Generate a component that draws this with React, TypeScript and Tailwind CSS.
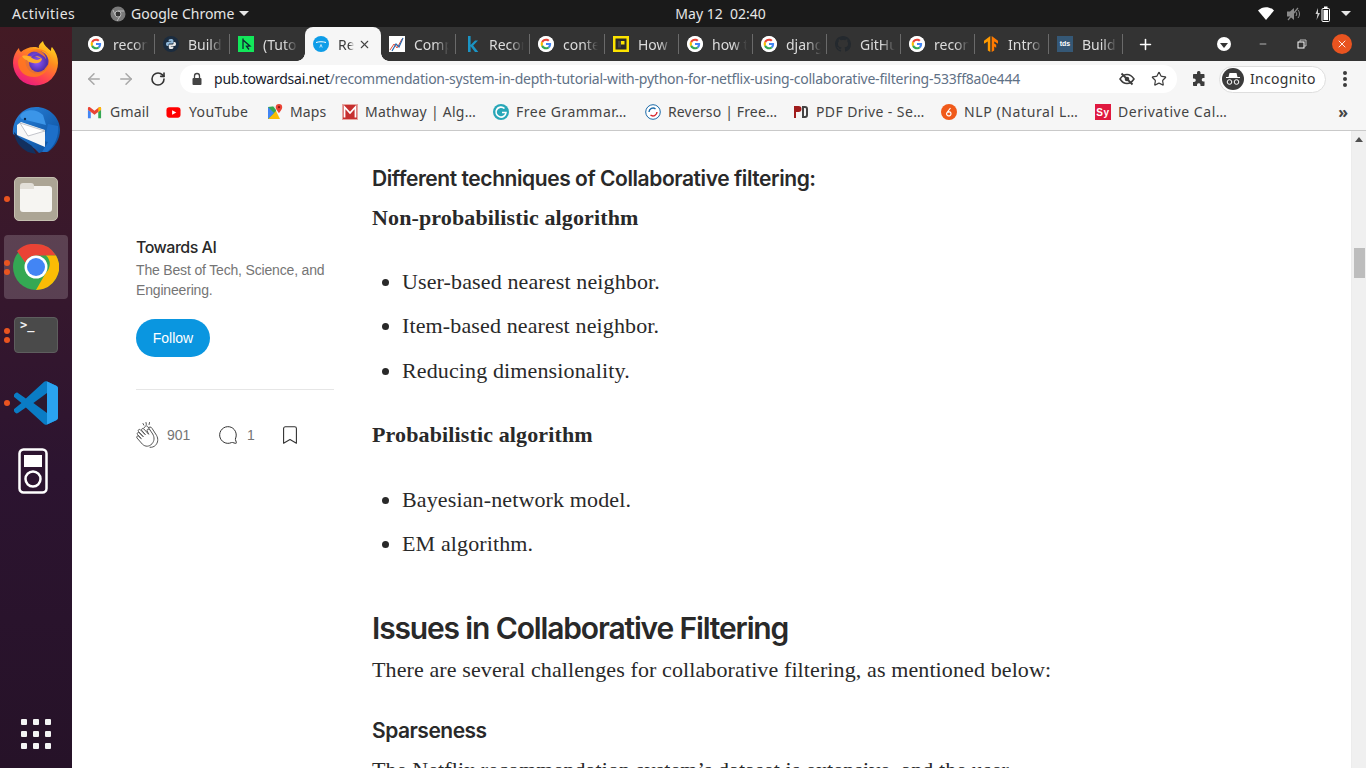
import React from "react";
import { ArrowLeft, ArrowRight, RotateCw, X, Plus, Star, MessageCircle, Bookmark, Minus } from "lucide-react";

const G = ({ s = 16 }: { s?: number }) => (
  <svg width={s} height={s} viewBox="0 0 48 48" className="flex-none rounded-full bg-white">
    <circle cx="24" cy="24" r="24" fill="#fff" />
    <g transform="translate(8 8) scale(.667)">
      <path fill="#EA4335" d="M24 9.5c3.5 0 6.7 1.2 9.2 3.6l6.9-6.9C35.9 2.4 30.5 0 24 0 14.6 0 6.5 5.4 2.6 13.2l8 6.2C12.5 13.6 17.8 9.5 24 9.5z" />
      <path fill="#4285F4" d="M47 24.5c0-1.6-.1-3.1-.4-4.5H24v9h13c-.6 3-2.3 5.500-4.800 7.200l7.700 6C44.400 38.500 47 32 47 24.500z" />
      <path fill="#FBBC05" d="M10.600 28.600c-.5-1.400-.8-3-.8-4.600s.3-3.200.8-4.600l-8-6.200C.9 16.500 0 20.100 0 24s.9 7.500 2.600 10.800l8-6.200z" />
      <path fill="#34A853" d="M24 48c6.500 0 11.900-2.100 15.900-5.800l-7.700-6c-2.200 1.500-5 2.300-8.200 2.300-6.200 0-11.500-4.100-13.400-9.900l-8 6.200C6.500 42.600 14.600 48 24 48z" />
    </g>
  </svg>
);

const PyIcon = () => (
  <svg width="16" height="16" viewBox="0 0 16 16" className="flex-none">
    <circle cx="8" cy="8" r="8" fill="#1b2c3f" />
    <path d="M8 3C6 3 5.600 3.800 5.600 4.600V5.600H8.200V6H4.500C3.500 6 3 6.800 3 8s.5 2 1.500 2h1V8.800C5.500 7.800 6.200 7.400 7 7.400h2.200c.7 0 1.200-.5 1.200-1.200V4.600C10.400 3.600 9.500 3 8 3z" fill="#8fb7d8" />
    <path d="M8 13c2 0 2.400-.8 2.400-1.600V10.400H7.800V10h3.700c1 0 1.500-.8 1.500-2s-.5-2-1.500-2h-1v1.200c0 1-.7 1.400-1.500 1.400H7c-.7 0-1.200.5-1.200 1.200v1.600C5.800 12.400 6.500 13 8 13z" fill="#e8e8e8" />
  </svg>
);
const TutIcon = () => (
  <svg width="16" height="16" viewBox="0 0 16 16" className="flex-none">
    <rect width="16" height="16" fill="#12e85a" />
    <path d="M5 2.500V13M5 4l7 6-3.500.3L11 13.500" stroke="#123" strokeWidth="1.300" fill="none" />
  </svg>
);
const AiIcon = () => (
  <svg width="16" height="16" viewBox="0 0 16 16" className="flex-none">
    <circle cx="8" cy="8" r="8" fill="#0e9de8" />
    <path d="M3 6.500c3-1 7-1 10 0" stroke="#fff" strokeWidth="1" fill="none" />
    <path d="M6.800 11.500l1.200-3 1.200 3" stroke="#fff" strokeWidth=".7" fill="none" />
  </svg>
);
const CompIcon = () => (
  <svg width="16" height="16" viewBox="0 0 16 16" className="flex-none">
    <rect width="16" height="16" fill="#fff" />
    <path d="M1 14l4-6 3 4 5-9" stroke="#e5533d" strokeWidth="1" fill="none" />
    <path d="M3 15l4-7 3 3 4-9" stroke="#2767ad" strokeWidth="1.200" fill="none" />
  </svg>
);
const KIcon = () => (
  <svg width="16" height="16" viewBox="0 0 16 16" className="flex-none">
    <path d="M4 0h2.600v9L11 4.500h3L9.200 9.400 14.300 16H11l-4.400-5.800V16H4z" fill="#1b94c4" />
  </svg>
);
const HowIcon = () => (
  <svg width="16" height="16" viewBox="0 0 16 16" className="flex-none">
    <rect width="16" height="16" fill="#fce300" />
    <rect x="2.500" y="2.500" width="11" height="11" fill="#2a2a2a" />
    <rect x="8" y="5" width="3.500" height="3.500" fill="#fce300" />
    <rect x="5" y="5" width="3" height="6.500" fill="#444" />
  </svg>
);
const GhIcon = () => (
  <svg width="16" height="16" viewBox="0 0 16 16" className="flex-none">
    <path fill="#24292e" d="M8 0C3.580 0 0 3.580 0 8c0 3.540 2.290 6.530 5.470 7.590.4.070.55-.170.55-.380 0-.190-.010-.820-.010-1.490-2.010.370-2.530-.490-2.690-.940-.090-.230-.480-.940-.820-1.130-.280-.150-.680-.520-.010-.530.630-.010 1.080.580 1.230.820.720 1.210 1.870.870 2.330.660.070-.520.280-.870.510-1.070-1.780-.200-3.640-.890-3.640-3.950 0-.870.310-1.590.820-2.150-.080-.200-.360-1.020.080-2.120 0 0 .670-.210 2.200.820a7.420 7.420 0 0 1 4 0c1.530-1.040 2.200-.820 2.200-.820.440 1.100.160 1.920.080 2.120.510.560.820 1.270.820 2.150 0 3.070-1.870 3.750-3.650 3.950.290.250.540.730.540 1.480 0 1.070-.010 1.930-.010 2.200 0 .210.150.460.550.380A8.010 8.010 0 0 0 16 8c0-4.420-3.580-8-8-8z" />
  </svg>
);
const TfIcon = () => (
  <svg width="16" height="16" viewBox="0 0 16 16" className="flex-none">
    <path d="M7.300 0v16l-2.500-1.500V5.500L1 7.700V4.700z" fill="#ff9a00" />
    <path d="M8.700 0v16l2.500-1.500v-4l2 1.200V8.800l-2-1.200V5.500l3.800 2.200V4.700z" fill="#ff7a00" />
  </svg>
);
const TdsIcon = () => (
  <div className="w-4 h-4 flex-none bg-[#355876] text-white text-[7px] font-bold flex items-center justify-center font-['Liberation_Sans',sans-serif]">tds</div>
);

const tabs: { icon: React.ReactNode; label: string; w: string; active?: boolean; noSep?: boolean }[] = [
  { icon: <G />, label: "recon", w: "w-[75px]" },
  { icon: <PyIcon />, label: "Build", w: "w-[75px]" },
  { icon: <TutIcon />, label: "(Tuto", w: "w-[75px]", noSep: true },
  { icon: <AiIcon />, label: "Re", w: "w-[76px]", active: true, noSep: true },
  { icon: <CompIcon />, label: "Comp", w: "w-[75px]" },
  { icon: <KIcon />, label: "Recon", w: "w-[74px]" },
  { icon: <G />, label: "conte", w: "w-[75px]" },
  { icon: <HowIcon />, label: "How", w: "w-[74px]" },
  { icon: <G />, label: "how t", w: "w-[74px]" },
  { icon: <G />, label: "djang", w: "w-[74px]" },
  { icon: <GhIcon />, label: "GitHu", w: "w-[74px]" },
  { icon: <G />, label: "recon", w: "w-[74px]" },
  { icon: <TfIcon />, label: "Intro", w: "w-[74px]" },
  { icon: <TdsIcon />, label: "Build", w: "w-[74px]" },
];

const GmailI = () => (
  <svg width="15" height="15" viewBox="0 0 16 16" className="flex-none">
    <path d="M1 14V3.500L8 9l7-5.500V14h-3V7.500L8 10.500 4 7.500V14z" fill="#e8e8e8" />
    <path d="M1 14h3V7.500L1 5z" fill="#4285f4" />
    <path d="M12 14h3V5l-3 2.500z" fill="#34a853" />
    <path d="M1 5V3.500C1 2.300 2.300 1.800 3.200 2.500L8 6.200 12.800 2.500c.9-.7 2.200-.2 2.200 1V5L8 10.500z" fill="#ea4335" />
    <path d="M12 3.200l.8-.7c.9-.7 2.200-.2 2.200 1V5l-3 2.500z" fill="#fbbc04" />
  </svg>
);
const YtI = () => (
  <svg width="15" height="15" viewBox="0 0 16 16" className="flex-none">
    <rect x="0.500" y="2.500" width="15" height="11" rx="3" fill="#f00" />
    <path d="M6.500 5.500v5L11 8z" fill="#fff" />
  </svg>
);
const MapsI = () => (
  <svg width="16" height="16" viewBox="0 0 16 16" className="flex-none">
    <path d="M1 3l8-1v13l-8 0z" fill="#34a853" />
    <path d="M1 15L9 7l4 8z" fill="#fbbc04" />
    <path d="M1 3l6 6-6 6z" fill="#4285f4" />
    <path d="M6 2h3v4z" fill="#e8e8e8" />
    <path d="M12 0a3.200 3.200 0 0 0-3.200 3.200C8.800 5.500 12 9 12 9s3.200-3.500 3.200-5.800A3.200 3.200 0 0 0 12 0z" fill="#ea4335" />
    <circle cx="12" cy="3.200" r="1.100" fill="#8b1a10" />
  </svg>
);
const MathI = () => (
  <svg width="16" height="16" viewBox="0 0 16 16" className="flex-none">
    <rect width="16" height="16" fill="#c62f2f" />
    <path d="M2.500 13.500V3L8 9l5.500-6v10.500" stroke="#fff" strokeWidth="1.800" fill="none" />
    <rect x="0.500" y="0.500" width="15" height="15" fill="none" stroke="#e8a5a0" />
  </svg>
);
const GramI = () => (
  <svg width="16" height="16" viewBox="0 0 16 16" className="flex-none">
    <circle cx="8" cy="8" r="8" fill="#28a7b8" />
    <path d="M11.500 4.500A5 5 0 1 0 13 8.500H9" stroke="#fff" strokeWidth="1.600" fill="none" />
  </svg>
);
const RevI = () => (
  <svg width="16" height="16" viewBox="0 0 16 16" className="flex-none">
    <circle cx="8" cy="8" r="7.300" fill="#fff" stroke="#1b6aa8" />
    <path d="M4 8a4 4 0 0 1 6.500-3" stroke="#1b6aa8" strokeWidth="1.400" fill="none" />
    <path d="M12 8a4 4 0 0 1-6.500 3" stroke="#d8232a" strokeWidth="1.400" fill="none" />
  </svg>
);
const PdfI = () => (
  <svg width="16" height="16" viewBox="0 0 16 16" className="flex-none">
    <path d="M1 2h4.500a2.500 2.500 0 0 1 0 6H3v6H1z" fill="#a01c1c" />
    <path d="M9 2h3a3 3 0 0 1 3 3v6a3 3 0 0 1-3 3H9zM11 4v8h1a1 1 0 0 0 1-1V5a1 1 0 0 0-1-1z" fill="#444" />
  </svg>
);
const NlpI = () => (
  <svg width="16" height="16" viewBox="0 0 16 16" className="flex-none">
    <circle cx="8" cy="8" r="8" fill="#f05a1a" />
    <path d="M9.500 4L6 8.500a2.200 2.200 0 1 0 4 1.200A2 2 0 0 0 6.500 8.500" stroke="#fff" strokeWidth="1.200" fill="none" />
  </svg>
);
const SyI = () => (
  <div className="w-4 h-4 flex-none bg-[#e0193f] text-white text-[10px] font-bold flex items-center justify-center font-['Liberation_Sans',sans-serif]">Sy</div>
);

const marks = [
  { icon: <GmailI />, label: "Gmail", w: "w-[79px] tracking-[0.2px]" },
  { icon: <YtI />, label: "YouTube", w: "w-[101px] tracking-[0.4px]" },
  { icon: <MapsI />, label: "Maps", w: "w-[75px] tracking-[0.1px]" },
  { icon: <MathI />, label: "Mathway | Alg…", w: "w-[151px] tracking-[0.25px]" },
  { icon: <GramI />, label: "Free Grammar…", w: "w-[152px] tracking-[0.5px]" },
  { icon: <RevI />, label: "Reverso | Free…", w: "w-[148px] tracking-[0.15px]" },
  { icon: <PdfI />, label: "PDF Drive - Se…", w: "w-[148px] tracking-[0.4px]" },
  { icon: <NlpI />, label: "NLP (Natural L…", w: "w-[154px] tracking-[0.6px]" },
  { icon: <SyI />, label: "Derivative Cal…", w: "w-[220px] tracking-[0.55px]" },
];

const Dots = ({ n }: { n: number }) => (
  <div className="absolute left-[4px] top-0 bottom-0 flex flex-col justify-center gap-[3px]">
    {Array.from({ length: n }).map((_, i) => (
      <div key={i} className="w-[6px] h-[6px] rounded-full bg-[#e95420]" />
    ))}
  </div>
);

const Firefox = () => (
  <svg width="46" height="46" viewBox="0 0 46 46">
    <defs>
      <linearGradient id="ffa" x1="0.800" y1="0" x2="0.200" y2="1">
        <stop offset="0" stopColor="#ffe11f" />
        <stop offset=".35" stopColor="#ff8a1f" />
        <stop offset=".7" stopColor="#ff3e55" />
        <stop offset="1" stopColor="#e31587" />
      </linearGradient>
      <radialGradient id="ffb" cx=".45" cy=".45" r=".6">
        <stop offset="0" stopColor="#9059ff" />
        <stop offset="1" stopColor="#4a2aa0" />
      </radialGradient>
    </defs>
    <path d="M30 1c1 5 5 7 8 10 0-2 0-3 1-4 4 5 6 10 6 16a22.500 22.500 0 0 1-45 0c0-4 1-8 3-11 1-2 2-3 3-4 0 2 1 3 2 4 3-3 8-5 13-5 2 0 4 .5 5 1-1-3 2-5 4-7z" fill="url(#ffa)" />
    <circle cx="24" cy="22" r="11.500" fill="url(#ffb)" />
    <path d="M8 17c4-2 8-2 12 0 4 2 7 3 9-1-2-3-6-5-10-4-3 0-6 1-7 3 2-3 7-6 12-6 7 0 12 4 14 10-2-5-6-8-10-8 3 2 5 5 5 8 0 8-6 12-12 12 5 1 13-2 15-9 0 8-6 15-15 15C12 37 5 31 5 22c0-2 1-4 3-5z" fill="#ff7b1c" opacity=".85" />
    <circle cx="25" cy="23" r="9" fill="url(#ffb)" />
    <path d="M9 16c4-1 8 0 10 2 3 2 6 3 9 0-2 0-4-1-6-2 3 0 6 1 7 3-1 4-5 5-9 4-3-1-5-1-6-3-2 0-4-2-5-4z" fill="#ffae2c" />
  </svg>
);
const Thunderbird = () => (
  <svg width="48" height="50" viewBox="0 0 48 50">
    <defs>
      <linearGradient id="tba" x1="0" y1="0" x2="1" y2="1">
        <stop offset="0" stopColor="#2a86e0" />
        <stop offset="1" stopColor="#0a4a96" />
      </linearGradient>
    </defs>
    <path d="M24 1c13 0 24 10 24 23 0 9-5 17-12 22l-3-1-6 2-4-4-8-6L1 28C0 14 10 1 24 1z" fill="url(#tba)" />
    <path d="M2 26c1 9 6 16 14 20l8 2-4-8-12-8z" fill="#12305f" />
    <path d="M36 18l10 2c1 10-3 20-11 26l-5 0 6-10-4-1z" fill="#1d6fc9" />
    <path d="M12 6c6-3 14-2 19 3l3 10-24-6c-3-2-2-5 2-7z" fill="#3b95e8" />
    <path d="M5 19l4-3 24 8v17L5 29z" fill="#f7f7f7" />
    <path d="M8 17l25 8-17 5z" fill="#fff" stroke="#a9acb4" strokeWidth=".7" />
    <circle cx="13" cy="13" r="1.200" fill="#0a2a50" />
  </svg>
);
const Chrome = () => (
  <svg width="46" height="46" viewBox="0 0 46 46">
    <circle cx="23" cy="23" r="23" fill="#34a853" />
    <path d="M23 0a23 23 0 0 1 20 11.500H23a11.500 11.500 0 0 0-10.700 7.300L4 7A23 23 0 0 1 23 0z" fill="#ea4335" />
    <path d="M43 11.500A23 23 0 0 1 23 46l10-17.500a11.500 11.500 0 0 0 0-17z" fill="#fbbc05" />
    <circle cx="23" cy="23" r="11.500" fill="#fff" />
    <circle cx="23" cy="23" r="9" fill="#4285f4" />
  </svg>
);
const VsCode = () => (
  <svg width="44" height="44" viewBox="0 0 100 100">
    <path d="M96 11L75 1c-2-1-5-1-7 1L27 40 9 27c-2-1-4-1-6 1l-2 2c-2 2-2 5 0 7l16 13L1 63c-2 2-2 5 0 7l2 2c2 2 4 2 6 1l18-13 41 38c2 2 5 2 7 1l21-10c2-1 4-3 4-6V17c0-3-2-5-4-6z" fill="#0a7cc5" />
    <path d="M75 27L44 50l31 23z" fill="#2c1a30" />
    <path d="M71 .5c2-.5 3 0 4 .5l21 10c2 1 4 3 4 6v66c0 3-2 5-4 6L75 99c-1 .5-3 1-4 .5 3 1 4-1 4-3V3c0-2-1-3-4-2.500z" fill="#2aa3f0" />
  </svg>
);
const Ipod = () => (
  <svg width="30" height="46" viewBox="0 0 30 46" fill="none" className="-ml-[6px]">
    <rect x="1.500" y="1.500" width="27" height="43" rx="4" stroke="#fff" strokeWidth="2.500" />
    <rect x="6" y="7" width="18" height="12" fill="#fff" />
    <circle cx="15" cy="31" r="7.500" stroke="#fff" strokeWidth="2.500" />
  </svg>
);

const Clap = () => (
  <svg width="24" height="28" viewBox="0 0 24 28" fill="#fff" stroke="#555" strokeWidth="1" strokeLinecap="round" strokeLinejoin="round" className="flex-none">
    <path d="M11 1.500l.3 2M14.500 1.500l-.4 2M8 2.500l.8 1.600" fill="none" />
    <path d="M13 7l2-1c1 0 1.500.5 2 1.300l4.500 7c2 3.500 1.500 7.500-1 10-1.500 1.500-3.500 2.200-5.500 2" />
    <path d="M9 7l1-1.500c.8-1 2-.8 2.700 0l5 7.500c2 3.500 1.700 7-.7 9.800-3 3-6.500 3.200-9.500.5L2 17c-1-1.200.4-2.700 1.600-1.800l2.700 2.500-3.800-4.200c-1-1.200.6-2.700 1.800-1.700l4 4L3.500 10.500c-1-1.200.6-2.800 1.800-1.800l5 5-3.500-4.200C5.900 8.300 7.500 6.800 8.700 7.800l5 5.500-1.600-3.500c-.5-1.500 1.500-2.500 2.400-1" />
  </svg>
);

const DockItem = ({ dots, active, children }: { dots?: number; active?: boolean; children: React.ReactNode }) => (
  <div className="relative h-[68px] w-[72px] flex items-center justify-center">
    {active && <div className="absolute left-[4px] top-[2px] w-[64px] h-[64px] rounded-[4px] bg-[#ffffff2e]" />}
    <div className="relative flex items-center justify-center">{children}</div>
    {dots ? <Dots n={dots} /> : null}
  </div>
);

export default function App() {
  return (
    <div className="w-[1366px] h-[768px] overflow-hidden flex flex-col font-['Noto_Sans',sans-serif] bg-white">
      {/* GNOME top bar */}
      <div className="h-[27px] flex-none bg-[#1a1a1a] text-[#e6e6e6] text-[14px] flex items-center relative">
        <span className="ml-[12px] w-[98px] tracking-[0.5px]">Activities</span>
        <svg width="16" height="16" viewBox="0 0 16 16" className="flex-none">
          <circle cx="8" cy="8" r="7.500" fill="#7a7a7a" />
          <circle cx="8" cy="8" r="3" fill="#333" stroke="#bbb" />
          <path d="M8 5h6M5.500 9.500L3 4M10.500 9.500L7 15" stroke="#bbb" strokeWidth="1" />
        </svg>
        <span className="ml-[5px]">Google Chrome</span>
        <span className="ml-[5px] w-0 h-0 border-x-[5px] border-x-transparent border-t-[5px] border-t-[#e6e6e6]" />
        <span className="ml-[426px] whitespace-pre">May 12  02:40</span>
        <div className="ml-auto flex items-center">
          <svg width="16" height="13" viewBox="0 0 16 13" className="flex-none"><path d="M0 3.500C4.500-1 11.500-1 16 3.500L8 13z" fill="#fff" /></svg>
          <svg width="16" height="16" viewBox="0 0 16 16" className="ml-[12px] flex-none" fill="none"><path d="M1 5.500h3L8 2v12l-4-3.500H1z" fill="#8a8a8a" /><path d="M2 14L12 2" stroke="#8a8a8a" strokeWidth="1.200" /><path d="M10 6a3 3 0 0 1 0 4M12 4a6 6 0 0 1 0 8" stroke="#8a8a8a" /></svg>
          <svg width="16" height="16" viewBox="0 0 16 16" className="ml-[13px] flex-none" fill="none"><path d="M3 2L0.500 8h2L1.500 14 5 7H3z" fill="#ccc" /><rect x="7" y="2.500" width="7.500" height="13" rx="1" stroke="#fff" /><rect x="8.500" y="4" width="4.500" height="10" fill="#fff" /><rect x="9" y="0.500" width="3.500" height="2" fill="#fff" /></svg>
          <span className="ml-[10px] mr-[15px] w-0 h-0 border-x-[5px] border-x-transparent border-t-[5px] border-t-[#e6e6e6]" />
        </div>
      </div>

      <div className="flex-1 flex min-h-0">
        {/* Dock */}
        <div className="w-[72px] flex-none flex flex-col pt-[2px] bg-[linear-gradient(180deg,#431a24_0%,#38182c_30%,#2c1430_60%,#261228_100%)]">
          <DockItem><Firefox /></DockItem>
          <DockItem><Thunderbird /></DockItem>
          <DockItem dots={1}>
            <div className="w-[44px] h-[44px] rounded-[5px] bg-[#aca595] border border-[#c5bfb0] flex items-center justify-center">
              <div className="relative w-[32px] h-[26px] rounded-[3px] bg-[#f6f5f2]">
                <div className="absolute -top-[3px] left-0 w-[14px] h-[6px] rounded-t-[3px] bg-[#e2dfd8]" />
              </div>
            </div>
          </DockItem>
          <DockItem active dots={2}><Chrome /></DockItem>
          <DockItem dots={2}>
            <div className="w-[44px] h-[36px] rounded-[4px] bg-[#4a4a4a] border border-[#5e5e5e] text-[#f2f2f2] text-[12px] leading-[14px] pl-[5px] font-['DejaVu_Sans_Mono',monospace] font-bold">&gt;_</div>
          </DockItem>
          <DockItem dots={1}><VsCode /></DockItem>
          <DockItem><Ipod /></DockItem>
          <div className="mt-auto h-[68px] flex items-center justify-center">
            <div className="grid grid-cols-3 gap-[6px]">
              {Array.from({ length: 9 }).map((_, i) => (
                <div key={i} className="w-[6px] h-[6px] rounded-[1px] bg-[#f4f4f4]" />
              ))}
            </div>
          </div>
        </div>

        {/* Browser */}
        <div className="flex-1 min-w-0 flex flex-col">
          {/* Tab strip */}
          <div className="h-[34px] flex-none bg-[#333333] flex items-center pl-[8px]">
            {tabs.map((t, i) => (
              <div
                key={i}
                className={
                  t.active
                    ? `relative h-[34px] ${t.w} flex-none flex items-center pl-[8px] pr-[9px] bg-[#f6f6f6] rounded-t-[8px]`
                    : `h-[34px] ${t.w} flex-none flex items-center pl-[8px]`
                }
              >
                {t.active && (
                  <>
                    <span className="absolute -left-[8px] bottom-0 w-[8px] h-[8px] bg-[radial-gradient(circle_at_0_0,transparent_7.500px,#f6f6f6_8px)]" />
                    <span className="absolute -right-[8px] bottom-0 w-[8px] h-[8px] bg-[radial-gradient(circle_at_100%_0,transparent_7.500px,#f6f6f6_8px)]" />
                  </>
                )}
                {t.icon}
                {t.active ? (
                  <>
                    <span className="ml-[9px] w-[16px] overflow-hidden whitespace-nowrap text-[14px] text-[#3c3c3c] [mask-image:linear-gradient(to_right,black_70%,transparent)]">{t.label}</span>
                    <X size={13} strokeWidth={2} className="ml-auto mr-[1px] text-[#444]" />
                  </>
                ) : (
                  <span className="ml-[9px] w-[35px] overflow-hidden whitespace-nowrap text-[14px] text-[#dcdcdc] [mask-image:linear-gradient(to_right,black_60%,transparent)]">{t.label}</span>
                )}
                {!t.active && <span className={t.noSep ? "ml-auto w-px h-5" : "ml-auto w-px h-5 bg-[#6a6a6a]"} />}
              </div>
            ))}
            <Plus size={17} strokeWidth={2.200} className="ml-[14px] text-white flex-none" />
            <div className="ml-[63px] w-[14px] h-[14px] rounded-full bg-white flex items-center justify-center flex-none">
              <span className="mt-[2px] w-0 h-0 border-x-[4px] border-x-transparent border-t-[5px] border-t-[#333]" />
            </div>
            <Minus size={10} strokeWidth={1.500} className="ml-[27px] text-white flex-none" />
            <svg width="10" height="10" viewBox="0 0 10 10" fill="none" className="ml-[29px] flex-none"><rect x="1" y="3" width="6" height="6" stroke="#fff" /><path d="M3 3V1h6v6H7" stroke="#bbb" /></svg>
            <div className="ml-[25px] w-[20px] h-[20px] rounded-full bg-[#e95420] flex items-center justify-center flex-none">
              <X size={12} strokeWidth={1.800} className="text-white" />
            </div>
          </div>

          {/* Toolbar */}
          <div className="h-[36px] flex-none bg-[#f6f6f6] flex items-center pl-[6px]">
            <div className="w-8 flex justify-center"><ArrowLeft size={18} strokeWidth={2} className="text-[#a8a8a8]" /></div>
            <div className="w-8 flex justify-center"><ArrowRight size={18} strokeWidth={2} className="text-[#a8a8a8]" /></div>
            <div className="w-8 flex justify-center"><RotateCw size={16} strokeWidth={2.400} className="text-[#333]" /></div>
            <div className="ml-[6px] w-[997px] h-[28px] rounded-full bg-white flex items-center flex-none">
              <svg width="12" height="14" viewBox="0 0 12 14" className="ml-[11px] flex-none"><path d="M3.500 6V4a2.500 2.500 0 0 1 5 0v2" stroke="#444" strokeWidth="1.300" fill="none" /><rect x="1.500" y="6" width="9" height="7" rx="1" fill="#444" /></svg>
              <span className="ml-[11px] -mt-[2px] text-[14px] whitespace-nowrap text-[#5f7186] tracking-[-0.23px]"><span className="text-[#16202c]">pub.towardsai.net</span>/recommendation-system-in-depth-tutorial-with-python-for-netflix-using-collaborative-filtering-533ff8a0e444</span>
              <svg width="16" height="16" viewBox="0 0 16 16" fill="none" className="ml-auto flex-none"><path d="M1 8c2-3 4.500-4.500 7-4.500S13 5 15 8c-2 3-4.500 4.500-7 4.500S3 11 1 8z" stroke="#3c3c3c" strokeWidth="1.500" /><circle cx="8" cy="8" r="2.300" fill="#3c3c3c" /><path d="M2.500 2.500l11 11" stroke="#3c3c3c" strokeWidth="1.800" /></svg>
              <Star size={16} strokeWidth={1.800} className="ml-[16px] mr-[10px] text-[#3c3c3c] flex-none" />
            </div>
            <div className="ml-[10px] w-6 flex justify-center">
              <svg width="16" height="16" viewBox="0 0 16 16"><path d="M6 1.500a1.800 1.800 0 0 1 3.500 0V3h3.300c.4 0 .7.300.7.700V7h-1.400a1.800 1.800 0 0 0 0 3.500h1.400v3.800c0 .4-.3.700-.7.700H9.500v-1.300a1.800 1.800 0 0 0-3.500 0V15H2.700c-.4 0-.7-.3-.7-.7V11h1a1.800 1.800 0 0 0 0-3.600H2V3.700c0-.4.300-.7.700-.7H6z" fill="#3c3c3c" /></svg>
            </div>
            <div className="ml-[8px] w-[107px] h-[27px] rounded-full bg-white border border-[#dedede] flex items-center pl-[2px] flex-none">
              <div className="w-[22px] h-[22px] rounded-full bg-[#3c3c3c] flex items-center justify-center flex-none">
                <svg width="16" height="14" viewBox="0 0 16 14" fill="none"><path d="M4.500 1h7l1 4h-9z" fill="#fff" /><path d="M1 5.500h14" stroke="#fff" /><circle cx="4.500" cy="10" r="2.300" stroke="#fff" /><circle cx="11.500" cy="10" r="2.300" stroke="#fff" /></svg>
              </div>
              <span className="ml-[6px] -mt-[2px] text-[14px] text-[#333] tracking-[0.3px]">Incognito</span>
            </div>
            <div className="w-[38px] flex flex-col items-center gap-[2.500px]">
              <span className="w-[3.500px] h-[3.500px] rounded-full bg-[#3c3c3c]" />
              <span className="w-[3.500px] h-[3.500px] rounded-full bg-[#3c3c3c]" />
              <span className="w-[3.500px] h-[3.500px] rounded-full bg-[#3c3c3c]" />
            </div>
          </div>

          {/* Bookmarks */}
          <div className="h-[34px] flex-none bg-[#f6f6f6] border-b border-[#c9c9c9] flex items-center pl-[15px] pb-[3px] text-[14px] text-[#444]">
            {marks.map((m) => (
              <div key={m.label} className={`${m.w} flex-none flex items-center`}>
                <span className="w-[23px] flex-none">{m.icon}</span>
                <span className="whitespace-nowrap -mt-[2px]">{m.label}</span>
              </div>
            ))}
            <span className="ml-auto mr-[18px] text-[16px] font-bold leading-none text-[#444]">»</span>
          </div>

          {/* Page */}
          <div className="flex-1 min-h-0 flex overflow-hidden bg-white">
            <div className="w-[300px] flex-none pl-[64px] pt-[106px] font-['Liberation_Sans',sans-serif]">
              <div className="w-[198px]">
                <div className="text-[16px] leading-[20px] font-medium text-[#292929] tracking-[-0.5px] font-['Inter',sans-serif]">Towards AI</div>
                <div className="mt-[3px] text-[14px] leading-[20px] text-[#757575] tracking-[-0.17px]">The Best of Tech, Science, and Engineering.</div>
                <div className="mt-[19px] w-[74px] h-[38px] rounded-full bg-[#0a96e0] text-white text-[14px] flex items-center justify-center">Follow</div>
                <div className="mt-[32px] h-px bg-[#e6e6e6]" />
                <div className="mt-[33px] h-[24px] flex items-center text-[14px] text-[#757575] -ml-px">
                  <Clap />
                  <span className="ml-[8px] w-[22px]">901</span>
                  <MessageCircle size={20} strokeWidth={1.200} className="ml-[29px] -scale-x-100 text-[#333]" />
                  <span className="ml-[9px] w-[6px]">1</span>
                  <Bookmark size={22} strokeWidth={1.200} className="ml-[26px] text-[#333]" />
                </div>
              </div>
            </div>

            <div className="flex-1 min-w-0 text-[#292929] whitespace-nowrap">
              <div className="mt-[32px] text-[21px] leading-[32px] font-semibold font-['Inter',sans-serif] tracking-[-0.43px]">Different techniques of Collaborative filtering:</div>
              <div className="mt-[7px] text-[22px] leading-[32px] font-bold font-['Liberation_Serif',serif] tracking-[0.13px]">Non-probabilistic algorithm</div>
              <ul className="mt-[32px] list-disc pl-[30px] text-[22px] leading-[32px] font-['Liberation_Serif',serif] tracking-[0.13px]">
                <li>User-based nearest neighbor.</li>
                <li className="mt-[12px]">Item-based nearest neighbor.</li>
                <li className="mt-[13px]">Reducing dimensionality.</li>
              </ul>
              <div className="mt-[32px] text-[22px] leading-[32px] font-bold font-['Liberation_Serif',serif] tracking-[0.13px]">Probabilistic algorithm</div>
              <ul className="mt-[33px] list-disc pl-[30px] text-[22px] leading-[32px] font-['Liberation_Serif',serif] tracking-[0.13px]">
                <li>Bayesian-network model.</li>
                <li className="mt-[12px]">EM algorithm.</li>
              </ul>
              <div className="mt-[48px] text-[30px] leading-[40px] font-semibold font-['Inter',sans-serif] tracking-[-1.15px]">Issues in Collaborative Filtering</div>
              <div className="mt-[6px] text-[22px] leading-[32px] font-['Liberation_Serif',serif] tracking-[0.11px]">There are several challenges for collaborative filtering, as mentioned below:</div>
              <div className="mt-[29px] text-[21px] leading-[32px] font-semibold font-['Inter',sans-serif] tracking-[-0.5px]">Sparseness</div>
              <div className="mt-[7px] text-[22px] leading-[32px] font-['Liberation_Serif',serif] tracking-[0.11px]">The Netflix recommendation system’s dataset is extensive, and the user-</div>
            </div>

            {/* Scrollbar */}
            <div className="w-[15px] flex-none bg-[#f0f0f0] flex flex-col items-center border-l border-[#ececec]">
              <span className="mt-[6px] w-0 h-0 border-x-[4px] border-x-transparent border-b-[5px] border-b-[#505050]" />
              <div className="mt-[106px] w-[11px] h-[30px] bg-[#bdbdbd]" />
            </div>
          </div>
        </div>
      </div>
    </div>
  );
}
